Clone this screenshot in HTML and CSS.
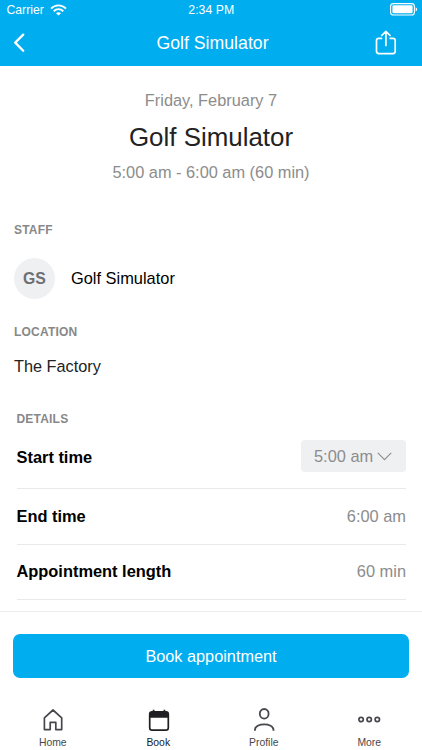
FILE: index.html
```html
<!DOCTYPE html>
<html lang="en">
<head>
<meta charset="utf-8">
<title>Golf Simulator</title>
<link rel="stylesheet" href="styles.css">
</head>
<body>
<div class="app">
  <header class="header">
    <div class="status">
      <div class="carrier"><span>Carrier</span>
        <svg width="17" height="12" viewBox="0 0 17 12" fill="none" stroke="#fff" stroke-width="1.9"><path d="M1 4.6C5.2.3 11.8.3 16 4.6M3.7 7.2c2.8-2.7 6.8-2.7 9.6 0"/><path d="M8.5 11.6 6 9.2c1.5-1.3 3.5-1.3 5 0z" fill="#fff" stroke="none"/></svg>
      </div>
      <span class="clock">2:34 PM</span>
      <svg class="battery" width="28" height="13" viewBox="0 0 28 13"><rect x=".6" y=".6" width="23.8" height="11.4" rx="2.8" fill="none" stroke="#fff" stroke-width="1.1"/><rect x="2.4" y="2.3" width="20.2" height="8" rx="1.2" fill="#fff"/><path d="M25.7 4.2c2 .8 2 3.4 0 4.2z" fill="#fff"/></svg>
    </div>
    <div class="nav">
      <svg width="12" height="20" viewBox="0 0 12 20" fill="none" stroke="#fff" stroke-width="2.3" stroke-linecap="round" stroke-linejoin="round"><path d="M10.2 1.6 2.2 9.6l8 8.2"/></svg>
      <span class="nav-title">Golf Simulator</span>
      <svg width="22" height="26" viewBox="0 0 22 26" fill="none" stroke="#fff" stroke-width="1.7" stroke-linecap="round" stroke-linejoin="round"><path d="M6.5 8.4H3.8Q1.5 8.4 1.5 10.7v10.6q0 2.3 2.3 2.3h14.1q2.3 0 2.3-2.3V10.7q0-2.3-2.3-2.3h-2.7M10.9 15.5V1.5M6.7 5.5l4.2-4.2 4.2 4.2"/></svg>
    </div>
  </header>
  <main class="content">
    <section class="summary">
      <p class="date">Friday, February 7</p>
      <h1>Golf Simulator</h1>
      <p class="time">5:00 am - 6:00 am (60 min)</p>
    </section>
    <section class="staff">
      <h2>STAFF</h2>
      <div class="person"><span class="avatar">GS</span><span class="name">Golf Simulator</span></div>
    </section>
    <section class="location">
      <h2>LOCATION</h2>
      <p>The Factory</p>
    </section>
    <section class="details">
      <h2>DETAILS</h2>
      <div class="row first"><strong>Start time</strong>
        <span class="select">5:00 am
          <svg width="15" height="10" viewBox="0 0 15 10" fill="none" stroke="#8e8f92" stroke-width="1.2"><path d="M.8 1.8 7.5 8.6l6.7-6.8"/></svg>
        </span>
      </div>
      <div class="row"><strong>End time</strong><span>6:00 am</span></div>
      <div class="row"><strong>Appointment length</strong><span>60 min</span></div>
    </section>
  </main>
  <div class="action"><button>Book appointment</button></div>
  <nav class="tabs">
    <a class="tab"><svg width="24" height="26" viewBox="0 0 24 26" fill="none" stroke="#47474d" stroke-width="1.7" stroke-linejoin="round"><path d="M3.4 10.8 12 3l8.7 7.8v11.8h-5.9v-7.3H9.2v7.3H3.4z"/></svg><span>Home</span></a>
    <a class="tab active"><svg width="24" height="26" viewBox="0 0 24 26" fill="none" stroke="#202024" stroke-width="1.7"><rect x="3.7" y="4.9" width="18.6" height="18.2" rx="2.4"/><path d="M3.7 10.8V7q0-2.1 2.1-2.1h14.4q2.1 0 2.1 2.1v3.8z" fill="#202024" stroke="none"/><path d="M7.6 2.7v4M18.4 2.7v4"/></svg><span>Book</span></a>
    <a class="tab"><svg width="24" height="26" viewBox="0 0 24 26" fill="none" stroke="#47474d" stroke-width="1.8"><ellipse cx="12.2" cy="6.8" rx="4.4" ry="4.8"/><path d="M2.9 23.8v-.9c0-7.4 18.6-7.4 18.6 0v.9"/></svg><span>Profile</span></a>
    <a class="tab"><svg width="24" height="26" viewBox="0 0 24 26" fill="none" stroke="#47474d" stroke-width="1.7"><circle cx="4.1" cy="12.5" r="2.2"/><circle cx="12.2" cy="12.5" r="2.2"/><circle cx="20.3" cy="12.5" r="2.2"/></svg><span>More</span></a>
  </nav>
</div>
</body>
</html>
```
FILE: styles.css
```css
* { box-sizing: border-box; margin: 0; padding: 0; }
body { font-family: "Liberation Sans", Arial, sans-serif; background: #fff; color: #000; }
.app { width: 422px; height: 750px; display: flex; flex-direction: column; overflow: hidden; }
svg { display: block; flex: none; }

.header { height: 66px; flex: none; background: #00adef; color: #fff; }
.status { height: 20px; display: grid; grid-template-columns: 1fr auto 1fr; align-items: center; padding: 0 4px 0 6.5px; font-size: 12.3px; line-height: 20px; }
.carrier { display: flex; gap: 6px; align-items: center; font-size: 12.2px; }
.clock { margin-top: -1px; margin-left: -2px; }
.battery { justify-self: end; margin-top: -1px; }
.nav { height: 46px; display: grid; grid-template-columns: 1fr auto 1fr; align-items: center; padding: 0 25px 0 13px; }
.nav svg:last-child { justify-self: end; }
.nav-title { font-size: 17.7px; margin-left: 15px; }

.content { height: 545px; flex: none; overflow: hidden; }
.summary { padding-top: 23px; text-align: center; color: #8c8c8c; font-size: 16.35px; line-height: 22px; }
h1 { margin: 10px 0 8px; font-size: 25.9px; font-weight: 400; line-height: 32px; color: #222; }
h2 { font-size: 12px; line-height: 14px; letter-spacing: .2px; color: #888; }
.staff { padding: 40px 14px 0; }
.person { display: flex; align-items: center; gap: 16px; margin-top: 21px; height: 41px; font-size: 16.4px; }
.avatar { width: 41px; height: 41px; border-radius: 50%; background: #eff0f2; color: #6d6f74; font-weight: 700; font-size: 15.8px; line-height: 41px; text-align: center; }
.location { padding: 26px 14px 0; }
.location p { margin-top: 17px; font-size: 16.3px; line-height: 20px; color: #222; }
.details { padding: 36px 16px 0 16.5px; }
.row { height: 55.5px; display: flex; justify-content: space-between; align-items: center; border-bottom: 1px solid #e9e9ea; font-size: 16.4px; color: #8c8c8c; }
.row strong { color: #000; }
.row.first { height: 63px; }
.select { display: flex; align-items: center; gap: 4px; width: 105px; height: 32px; margin-top: -2px; padding-left: 13px; border-radius: 4px; background: #eff0f2; }

.action { height: 84px; flex: none; border-top: 1px solid #ededee; padding: 22px 13px 0; }
button { display: block; width: 100%; height: 44px; border: 0; border-radius: 7px; background: #00adef; color: #fff; font: 16.3px "Liberation Sans", Arial, sans-serif; }
.tabs { height: 55px; display: grid; grid-template-columns: repeat(4, 1fr); }
.tab { display: flex; flex-direction: column; align-items: center; padding-top: 12px; color: #47474d; font-size: 10.4px; line-height: 12px; }
.tab span { margin-top: 4px; }
.active { color: #202024; }
```
